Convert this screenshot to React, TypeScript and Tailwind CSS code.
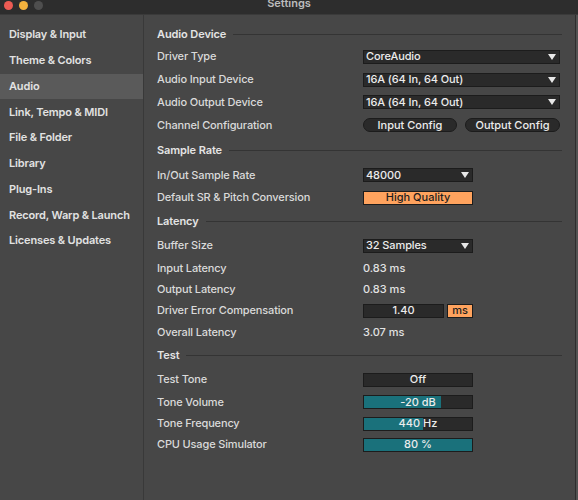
import React from "react";

const font = { fontFamily: "Inter, 'Noto Sans', sans-serif" };

const sidebarItems = [
  "Display & Input",
  "Theme & Colors",
  "Audio",
  "Link, Tempo & MIDI",
  "File & Folder",
  "Library",
  "Plug-Ins",
  "Record, Warp & Launch",
  "Licenses & Updates",
];

function Arrow() {
  return (
    <svg width="8" height="6" viewBox="0 0 8 6" className="shrink-0">
      <path d="M0 0 H8 L4 6 Z" fill="#e8e8e8" />
    </svg>
  );
}

function Dropdown({ value, wide }: { value: string; wide?: boolean }) {
  return (
    <div
      className={`flex h-[14px] items-center justify-between border border-[#1c1c1c] bg-[#2a2a2a] pl-[2px] pr-[3px] text-[11px] leading-none tracking-[-0.1px] text-[#ececec] ${
        wide ? "w-[197px]" : "w-[110px]"
      }`}
    >
      <span>{value}</span>
      <Arrow />
    </div>
  );
}

function Header({ title, h }: { title: string; h: string }) {
  return (
    <div className={`flex items-center ${h}`}>
      <span className="text-[11px] font-semibold leading-none tracking-[-0.1px] text-[#e4e4e4]">{title}</span>
      <div className="ml-[7px] h-px flex-1 bg-[#343434]" />
    </div>
  );
}

function Row({ label, h, children }: { label: string; h: string; children?: React.ReactNode }) {
  return (
    <div className={`flex items-center ${h}`}>
      <div className="w-[206px] shrink-0 text-[11px] leading-none tracking-[-0.15px] text-[#dadada]">{label}</div>
      <div className="flex items-center">{children}</div>
    </div>
  );
}

function Slider({ pct, children }: { pct: number; children: React.ReactNode }) {
  return (
    <div className="relative h-[14px] w-[110px] border border-[#1c1c1c] bg-[#2a2a2a]">
      <div className="absolute inset-y-0 left-0 bg-[#1a717b]" style={{ width: `${pct}%` }} />
      <div className="relative flex h-full items-center justify-center text-[11px] leading-none text-[#ececec]">
        {children}
      </div>
    </div>
  );
}

export default function App() {
  return (
    <div className="flex h-[500px] w-[578px] flex-col overflow-hidden bg-[#464646] font-medium" style={font}>
      {/* title bar */}
      <div className="relative flex h-[15px] shrink-0 items-start border-b border-[#3a3a3a] bg-[#2d2d2d]">
        <div className="flex gap-[6px] pl-[3.5px] pt-[0.5px]">
          <div className="h-[9px] w-[9px] rounded-full bg-[#ed5b53]" />
          <div className="h-[9px] w-[9px] rounded-full bg-[#f4b23d]" />
          <div className="h-[9px] w-[9px] rounded-full bg-[#4e4e4e]" />
        </div>
        <div className="absolute inset-x-0 -top-[2px] text-center text-[11px] font-semibold leading-[11px] text-[#bcbcbc]">
          Settings
        </div>
      </div>

      <div className="flex flex-1">
        {/* sidebar */}
        <div className="w-[144px] shrink-0 border-r border-[#393939] bg-[#474747] pt-[7px]">
          {sidebarItems.map((it) => (
            <div
              key={it}
              className={`flex h-[25.75px] items-center pl-[9px] text-[11px] font-semibold leading-none tracking-[-0.15px] text-[#e2e2e2] ${
                it === "Audio" ? "bg-[#5a5a5a]" : ""
              }`}
            >
              {it}
            </div>
          ))}
        </div>

        {/* main */}
        <div className="flex-1 bg-[#474747] pl-[13px] pr-[13px] pt-[8px]">
          <Header title="Audio Device" h="h-[22px]" />
          <Row label="Driver Type" h="h-[23px]">
            <Dropdown value="CoreAudio" wide />
          </Row>
          <Row label="Audio Input Device" h="h-[23px]">
            <Dropdown value="16A (64 In, 64 Out)" wide />
          </Row>
          <Row label="Audio Output Device" h="h-[22px]">
            <Dropdown value="16A (64 In, 64 Out)" wide />
          </Row>
          <Row label="Channel Configuration" h="h-[24px]">
            <div className="flex gap-[8px]">
              <div className="flex h-[14px] w-[94px] items-center justify-center rounded-full border border-[#1c1c1c] bg-[#2a2a2a] text-[11px] leading-none text-[#ececec]">
                Input Config
              </div>
              <div className="flex h-[14px] w-[95px] items-center justify-center rounded-full border border-[#1c1c1c] bg-[#2a2a2a] text-[11px] leading-none text-[#ececec]">
                Output Config
              </div>
            </div>
          </Row>

          <Header title="Sample Rate" h="h-[27px]" />
          <Row label="In/Out Sample Rate" h="h-[22px]">
            <Dropdown value="48000" />
          </Row>
          <Row label="Default SR & Pitch Conversion" h="h-[23px]">
            <div className="flex h-[14px] w-[110px] items-center justify-center border border-[#1c1c1c] bg-[#ffa35e] text-[11px] leading-none text-[#1e1e1e]">
              High Quality
            </div>
          </Row>

          <Header title="Latency" h="h-[25px]" />
          <Row label="Buffer Size" h="h-[23px]">
            <Dropdown value="32 Samples" />
          </Row>
          <Row label="Input Latency" h="h-[22px]">
            <span className="text-[11px] leading-none text-[#e2e2e2]">0.83 ms</span>
          </Row>
          <Row label="Output Latency" h="h-[21px]">
            <span className="text-[11px] leading-none text-[#e2e2e2]">0.83 ms</span>
          </Row>
          <Row label="Driver Error Compensation" h="h-[21px]">
            <div className="flex gap-[3px]">
              <div className="flex h-[14px] w-[81px] items-center justify-center border border-[#1c1c1c] bg-[#2a2a2a] text-[11px] leading-none text-[#ececec]">
                1.40
              </div>
              <div className="flex h-[14px] w-[26px] items-center justify-center border border-[#1c1c1c] bg-[#ffa35e] text-[11px] leading-none text-[#1e1e1e]">
                ms
              </div>
            </div>
          </Row>
          <Row label="Overall Latency" h="h-[22px]">
            <span className="text-[11px] leading-none text-[#e2e2e2]">3.07 ms</span>
          </Row>

          <Header title="Test" h="h-[25px]" />
          <Row label="Test Tone" h="h-[23px]">
            <div className="flex h-[14px] w-[110px] items-center justify-center border border-[#1c1c1c] bg-[#2a2a2a] text-[11px] leading-none text-[#ececec]">
              Off
            </div>
          </Row>
          <Row label="Tone Volume" h="h-[22px]">
            <Slider pct={71}>-20 dB</Slider>
          </Row>
          <Row label="Tone Frequency" h="h-[21px]">
            <Slider pct={55}>440 Hz</Slider>
          </Row>
          <Row label="CPU Usage Simulator" h="h-[21px]">
            <Slider pct={100}>80 %</Slider>
          </Row>
        </div>

        {/* right edge */}
        <div className="w-[3px] shrink-0 border-l border-[#2e2e2e] bg-[#525252]" />
      </div>
    </div>
  );
}
